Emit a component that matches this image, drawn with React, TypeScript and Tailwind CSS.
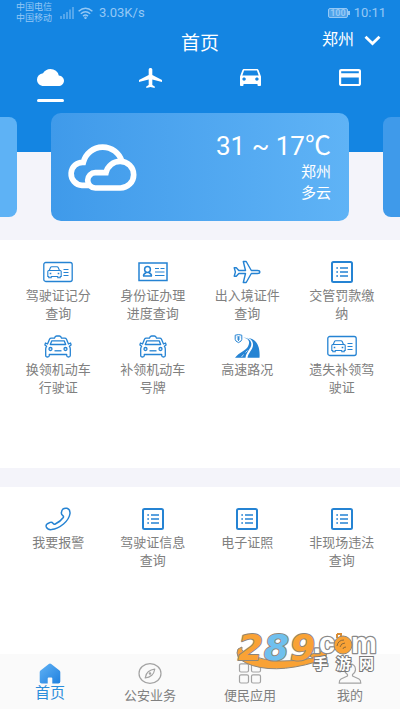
import { useState } from 'react';
import type { ReactNode } from 'react';

type IconProps = { className?: string };

type Service = {
  label: string;
  icon: (props: IconProps) => ReactNode;
};

/* ---------- Header tab icons ---------- */

function CloudIcon() {
  return (
    <svg viewBox="0 4 24 16" preserveAspectRatio="none" className="h-[17px] w-[27px]" fill="currentColor">
      <path d="M19.35 10.04A7.49 7.49 0 0 0 12 4C9.11 4 6.6 5.64 5.35 8.04A5.994 5.994 0 0 0 0 14c0 3.31 2.69 6 6 6h13c2.76 0 5-2.24 5-5 0-2.64-2.05-4.78-4.65-4.96z" />
    </svg>
  );
}

function FlightIcon() {
  return (
    <svg viewBox="2 2 19 20" preserveAspectRatio="none" className="h-[20px] w-[23px]" fill="currentColor">
      <path d="M21 16v-2l-8-5V3.500c0-.83-.67-1.500-1.500-1.500S10 2.670 10 3.500V9l-8 5v2l8-2.500V19l-2 1.500V22l3.500-1 3.500 1v-1.500L13 19v-5.500l8 2.500z" />
    </svg>
  );
}

function CarIcon() {
  return (
    <svg viewBox="3 5 18 16" preserveAspectRatio="none" className="h-[17px] w-[21px]" fill="currentColor">
      <path d="M18.920 6.010C18.720 5.420 18.160 5 17.500 5h-11c-.66 0-1.210.42-1.420 1.010L3 12v8c0 .55.45 1 1 1h1c.55 0 1-.45 1-1v-1h12v1c0 .55.45 1 1 1h1c.55 0 1-.45 1-1v-8l-2.080-5.990zM6.500 16c-.83 0-1.500-.67-1.500-1.500S5.670 13 6.500 13s1.500.67 1.500 1.500S7.330 16 6.500 16zm11 0c-.83 0-1.500-.67-1.500-1.500s.67-1.500 1.500-1.500 1.500.67 1.500 1.500-.67 1.500-1.500 1.500zM5 11l1.500-4.500h11L19 11H5z" />
    </svg>
  );
}

function CardIcon() {
  return (
    <svg viewBox="2 4 20 16" preserveAspectRatio="none" className="h-[17px] w-[22px]" fill="currentColor">
      <path d="M20 4H4c-1.110 0-1.990.89-1.990 2L2 18c0 1.110.89 2 2 2h16c1.110 0 2-.89 2-2V6c0-1.110-.89-2-2-2zm0 14H4v-6h16v6zm0-10H4V6h16v2z" />
    </svg>
  );
}

/* ---------- Service icons ---------- */

function LicenseIcon({ className }: IconProps) {
  return (
    <svg width="30" height="22" viewBox="0 0 30 22" fill="none" stroke="currentColor" className={className}>
      <rect x="0.800" y="1.500" width="28.400" height="19" rx="2" strokeWidth="1.300" />
      <path d="M6 10l1.500-3.500q.3-.7 1.200-.7h5.300q.9 0 1.200.7l1.500 3.500" strokeWidth="1.100" />
      <path d="M4.800 10.500q0-1 1-1h11.400q1 0 1 1v5h-1v1.300h-2.400v-1.300H8.200v1.300H5.800v-1.300h-1z" strokeWidth="1.100" />
      <path d="M6.700 12.500h1.600M14.700 12.500h1.600" strokeWidth="1.300" />
      <path d="M20.500 8.500h5M20.500 11.500h5M20.500 14.500h5" strokeWidth="1" />
    </svg>
  );
}

function IdCardIcon({ className }: IconProps) {
  return (
    <svg width="30" height="22" viewBox="0 0 30 22" fill="none" stroke="currentColor" className={className}>
      <rect x="1" y="2" width="28" height="17.500" strokeWidth="1.500" />
      <circle cx="9.500" cy="8.500" r="2.900" strokeWidth="1.500" />
      <path d="M5.500 15q0-2.500 2.800-3.200M13.500 15q0-2.500-2.800-3.200M5 15h9" strokeWidth="1.500" />
      <path d="M17 7.500h4M22.500 7.500h4M17 11h9.500M17 14.500h9.500" strokeWidth="1.200" />
    </svg>
  );
}

function PlaneOutlineIcon({ className }: IconProps) {
  return (
    <svg width="28" height="24" viewBox="0 0 28 24" fill="none" stroke="currentColor" strokeWidth="1.400" strokeLinejoin="round" className={className}>
      <path d="M26.800 12q0-1.500-2.300-1.500H18.300L13.200 1.500H10.300L12.500 10.500H5.800L3.300 7.800H1.200L2.400 12 1.200 16.200H3.300L5.800 13.500H12.500L10.300 22.500H13.200L18.300 13.500H24.500Q26.800 13.500 26.800 12z" />
    </svg>
  );
}

function ListIcon({ className }: IconProps) {
  return (
    <svg width="22" height="22" viewBox="0 0 22 22" fill="none" stroke="currentColor" className={className}>
      <rect x="1" y="1" width="20" height="20" rx="1.500" strokeWidth="2" />
      <path d="M9 7h8M9 11h8M9 15h8" strokeWidth="1.600" />
      <path d="M5.300 7H7M5.300 11H7M5.300 15H7" strokeWidth="1.600" />
    </svg>
  );
}

function TaxiIcon({ className }: IconProps) {
  return (
    <svg width="28" height="23" viewBox="0 0 28 23" fill="none" stroke="currentColor" strokeWidth="1.300" strokeLinejoin="round" className={className}>
      <path d="M10.500 3.200Q11 1 12.500 1h3q1.500 0 2 2.200h3.200q1.300 0 1.800 1l2 4.800 2-1 .6 2-1.800 1.200q1 1.300 1 2.800v6.500q0 1.500-1.800 1.500t-1.800-1.500v-1H5.300v1Q5.300 22 3.500 22t-1.800-1.500V14q0-1.500 1-2.800L.9 10l.6-2 2 1 2-4.800q.5-1 1.800-1z" />
      <path d="M6.300 9.500l1.500-3.700h12.400l1.500 3.700z" />
      <circle cx="6.500" cy="14" r="1.500" />
      <circle cx="21.500" cy="14" r="1.500" />
      <path d="M10.500 15.800h7" />
    </svg>
  );
}

function RoadIcon({ className }: IconProps) {
  return (
    <svg width="26" height="24" viewBox="0 0 26 24" fill="currentColor" className={className}>
      <path d="M9 3.500C15 4.500 16.500 8 14 12.500 11.800 16.500 5 18.500 1 23.800H11.500C12 17 20 13 16.500 7 15 4.800 12 3.600 9 3.500z" />
      <path d="M13 3.800C21 4.500 26.500 10 25.500 23.800H13.500C14 18 21.500 14 18.200 7.300 17.200 5.500 15.500 4.400 13 3.800z" />
      <path d="M7.500 23l2-2.500M11.500 18.500l2-2" stroke="#fff" strokeWidth="0.700" />
      <path d="M1.200 1.200L4.500.6l3.300.6v4.200q0 1.800-3.300 3.200Q1.200 7.200 1.200 5.400z" fill="none" stroke="currentColor" strokeWidth="1" />
      <path d="M2.800 3h3.400M3 5h3M4.500 2.500v4.500" stroke="currentColor" strokeWidth="0.900" />
    </svg>
  );
}

function PhoneIcon({ className }: IconProps) {
  return (
    <svg width="26" height="24" viewBox="0 0 26 24" fill="none" stroke="currentColor" strokeWidth="1.500" strokeLinejoin="round" className={className}>
      <path d="M17.800 2.200Q19.500.8 22 1.300 25.300 2.200 25 6.500 24.300 12 18.500 17 12.500 22 6.500 22.600 2.300 22.900 1.300 20 .6 17.800 2.500 16.700L5.200 15.400Q7 14.800 8 16.300 9 17.600 10.300 17 15.500 14.500 18.300 10.500 19 9.300 17.600 8.300 16 7.300 16.500 5.300 16.700 3.300 17.800 2.200z" />
    </svg>
  );
}

/* ---------- Bottom tab icons ---------- */

function HomeIcon() {
  return (
    <svg width="22" height="21" viewBox="0 0 22 21">
      <defs>
        <linearGradient id="home" x1="0" y1="0" x2="1" y2="1">
          <stop offset="0" stopColor="#62b3f5" />
          <stop offset="1" stopColor="#1f80df" />
        </linearGradient>
      </defs>
      <path d="M9.800 1Q11 0 12.200 1L20.500 7.500Q21.300 8.200 21.300 9.200V18.500Q21.300 20.500 19.300 20.500H13.300V15.500Q13.300 14.500 12.300 14.500H9.700Q8.700 14.500 8.700 15.500V20.500H2.700Q.7 20.500.7 18.500V9.200Q.7 8.200 1.500 7.500z" fill="url(#home)" />
    </svg>
  );
}

function CompassIcon() {
  return (
    <svg width="24" height="21" viewBox="0 0 24 21" fill="none" stroke="currentColor" strokeWidth="1.200" strokeLinejoin="round">
      <ellipse cx="12" cy="10.500" rx="11" ry="9.800" />
      <path d="M16.800 6Q16 10.500 13.800 12.200 11 14.500 7.200 15 8 10.500 10.200 8.800 13 6.500 16.800 6z" />
      <circle cx="12" cy="10.500" r="0.700" />
    </svg>
  );
}

function AppsIcon() {
  return (
    <svg width="24" height="21" viewBox="0 0 24 21" fill="none" stroke="currentColor" strokeWidth="1.200">
      <rect x="1.500" y="0.800" width="9" height="8.200" rx="1.500" />
      <rect x="13.500" y="0.800" width="9" height="8.200" rx="1.500" />
      <rect x="1.500" y="11.800" width="9" height="8.200" rx="1.500" />
      <rect x="13.500" y="11.800" width="9" height="8.200" rx="1.500" />
    </svg>
  );
}

function PersonIcon() {
  return (
    <svg width="24" height="21" viewBox="0 0 24 21" fill="none" stroke="currentColor" strokeWidth="1.200" strokeLinejoin="round">
      <path d="M9.500 11.500Q6.500 9.500 6.500 6.300 6.800 1 12 .8 17.200 1 17.500 6.300 17.500 9.500 14.500 11.500V13L21 16Q22.800 17 22.800 20.200H1.200Q1.200 17 3 16L9.500 13z" />
    </svg>
  );
}

/* ---------- Data ---------- */

const categories = [
  { label: '天气', icon: CloudIcon },
  { label: '航班', icon: FlightIcon },
  { label: '车辆', icon: CarIcon },
  { label: '证件', icon: CardIcon },
];

const mainServices: Service[] = [
  { label: '驾驶证记分查询', icon: LicenseIcon },
  { label: '身份证办理进度查询', icon: IdCardIcon },
  { label: '出入境证件查询', icon: PlaneOutlineIcon },
  { label: '交管罚款缴纳', icon: ListIcon },
  { label: '换领机动车行驶证', icon: TaxiIcon },
  { label: '补领机动车号牌', icon: TaxiIcon },
  { label: '高速路况', icon: RoadIcon },
  { label: '遗失补领驾驶证', icon: LicenseIcon },
];

const otherServices: Service[] = [
  { label: '我要报警', icon: PhoneIcon },
  { label: '驾驶证信息查询', icon: ListIcon },
  { label: '电子证照', icon: ListIcon },
  { label: '非现场违法查询', icon: ListIcon },
];

const tabs = [
  { label: '首页', icon: HomeIcon },
  { label: '公安业务', icon: CompassIcon },
  { label: '便民应用', icon: AppsIcon },
  { label: '我的', icon: PersonIcon },
];

/* ---------- Sections ---------- */

function StatusBar() {
  return (
    <div className="flex h-6 items-center justify-between pt-0.5 pl-4 pr-3.5 text-[#94c8f5]">
      <div className="flex items-center">
        <div className="text-[9px] leading-[11px]">
          <p>中国电信</p>
          <p>中国移动</p>
        </div>
        <svg width="14" height="12" viewBox="0 0 14 12" className="ml-2" fill="currentColor" opacity="0.5">
          <path d="M0 9h2v3H0zM3 7h2v5H3zM6 5h2v7H6zM9 2.500h2V12H9zM12 0h2v12h-2z" />
        </svg>
        <svg width="15" height="12" viewBox="0 0 15 12" className="ml-1" fill="none" stroke="currentColor" strokeWidth="1.500">
          <path d="M.6 4.200q6.900-6 13.800 0M2.800 6.700q4.700-4 9.400 0M5 9.100q2.500-2 5 0" />
          <circle cx="7.500" cy="10.800" r="0.500" />
        </svg>
        <span className="ml-1.5 text-[13px]">3.03K/s</span>
      </div>
      <div className="flex items-center">
        <span className="rounded-xs border border-current bg-[#4fa3ea] px-px text-[9px] leading-[8px] font-bold">100</span>
        <span className="h-1 w-0.5 bg-current" />
        <span className="ml-1 text-[13px]">10:11</span>
      </div>
    </div>
  );
}

function WeatherCard() {
  return (
    <section className="-mt-[39px] flex items-center gap-[34px]">
      <div className="h-[100px] w-[17px] rounded-r-lg bg-[#5eb2f5]" />
      <div className="flex h-[108px] flex-1 items-center justify-between rounded-[10px] bg-linear-to-r from-[#3f9aea] to-[#5fb3f6] pl-4 pr-[18px] text-white">
        <svg width="72" height="50" viewBox="203 116 216 150" fill="none" stroke="currentColor" strokeWidth="17">
          <path d="M268 246H248A34.500 34.500 0 0 1 252 177 A60 60 0 0 1 368 175" />
          <path d="M288 254A22.500 22.500 0 0 1 288 208H320A43 43 0 0 1 363 174 A40 40 0 0 1 363 254Z" />
        </svg>
        <div className="text-right text-[15px] leading-[21px]">
          <p className="text-[26px] leading-[32px]">31 ~ 17℃</p>
          <p>郑州</p>
          <p>多云</p>
        </div>
      </div>
      <div className="h-[100px] w-[17px] rounded-l-lg bg-[#3f9aea]" />
    </section>
  );
}

function ServiceGrid({ items }: { items: Service[] }) {
  return (
    <div className="grid grid-cols-4 gap-y-[11px] px-[11px]">
      {items.map((item) => {
        const Icon = item.icon;

        return (
          <a key={item.label} href="#" className="flex flex-col items-center">
            <span className="flex h-6 items-center">
              <Icon className="text-[#2583d3]" />
            </span>
            <span className="mt-[3px] w-[66px] text-center text-[13px] leading-[18px] text-[#808080]">{item.label}</span>
          </a>
        );
      })}
    </div>
  );
}

function SiteLogo() {
  return (
    <svg width="144" height="44" viewBox="0 0 144 44" className="pointer-events-none absolute right-[22px] bottom-[34px] overflow-visible">
      <path d="M4 18Q0 26 12 32 38 44 82 31L81 36 92 26 93 19 74 24 79 27Q44 34 18 25 6 21 8 16z" fill="#f9a235" stroke="#8f8678" strokeWidth="1" />
      <text
        x="4 30 56"
        y="29"
        fontFamily="DejaVu Sans"
        fontWeight="bold"
        fontStyle="italic"
        fontSize="36"
        fill="#f9a235"
        stroke="#8f8678"
        strokeWidth="2"
        strokeLinejoin="round"
        paintOrder="stroke"
      >
        2<tspan fill="#6fc0ee">8</tspan>9
      </text>
      <text
        x="79 85 117"
        y="22"
        fontFamily="Liberation Sans"
        fontWeight="bold"
        fontSize="29"
        fill="#fff"
        stroke="#8a8a8a"
        strokeWidth="2.500"
        strokeLinejoin="round"
        paintOrder="stroke"
      >
        .cm
      </text>
      <path d="M103 7V3M107 6V2M103 3h4" fill="none" stroke="#d98d35" strokeWidth="2" />
      <circle cx="109" cy="14" r="9" fill="#f9a235" stroke="#8f8678" strokeWidth="1" />
      <path d="M103 15q1-6 7-6M106 16q1-4 5-4M109 18q0-2 3-2" fill="none" stroke="#8f6a38" strokeWidth="1" />
      <text
        x="79 102 125"
        y="38"
        fontFamily="Noto Sans CJK SC"
        fontWeight="bold"
        fontSize="15"
        fill="#fff"
        stroke="#777"
        strokeWidth="2"
        paintOrder="stroke"
      >
        手游网
      </text>
    </svg>
  );
}

export default function App() {
  const [category, setCategory] = useState(0);
  const [tab, setTab] = useState(0);

  return (
    <div className="flex min-h-screen flex-col bg-white pb-0.5 font-[Roboto,'Noto_Sans_CJK_SC',sans-serif]">
      <div className="bg-[#f4f4fa] pb-[19px]">
        <header className="bg-[#1485e2] pb-[50px] text-white">
          <StatusBar />
          <div className="grid h-9 grid-cols-3 items-center pt-1">
            <h1 className="col-start-2 text-center text-[19px]">首页</h1>
            <button className="flex items-center gap-2.5 justify-self-end pr-[19px] pb-2 text-[16px]">
              郑州
              <svg width="17" height="11" viewBox="0 0 17 11" fill="none" stroke="currentColor" strokeWidth="2.800">
                <path d="M1.500 1.800l7 6.700 7-6.700" />
              </svg>
            </button>
          </div>
          <nav className="grid grid-cols-4">
            {categories.map((item, index) => {
              const Icon = item.icon;

              return (
                <button
                  key={item.label}
                  aria-label={item.label}
                  onClick={() => setCategory(index)}
                  className="flex flex-col items-center"
                >
                  <span className="flex h-[35px] items-center">
                    <Icon />
                  </span>
                  <span className={`mt-1 h-[3px] w-[27px] rounded-full ${category === index ? 'bg-white' : ''}`} />
                </button>
              );
            })}
          </nav>
        </header>

        <WeatherCard />
      </div>

      <main className="flex flex-1 flex-col">
        <section className="pt-5 pb-[71px]">
          <ServiceGrid items={mainServices} />
        </section>
        <section className="flex-1 border-t-[19px] border-[#f4f4fa] pt-5">
          <ServiceGrid items={otherServices} />
        </section>
      </main>

      {/* Bottom tab bar */}
      <div className="relative bg-[#fafafa]">
        <nav className="grid h-[55px] grid-cols-4 text-[#808080]">
          {tabs.map((item, index) => {
            const Icon = item.icon;

            return (
              <button key={item.label} onClick={() => setTab(index)} className="flex flex-col items-center pt-[9px]">
                <span className="text-[#a3a3a3]">
                  <Icon />
                </span>
                <span className={tab === index ? 'text-[15px] leading-[18px] text-[#2b8ddb]' : 'mt-[3px] text-[13px] leading-[18px]'}>
                  {item.label}
                </span>
              </button>
            );
          })}
        </nav>
        <SiteLogo />
      </div>
    </div>
  );
}
